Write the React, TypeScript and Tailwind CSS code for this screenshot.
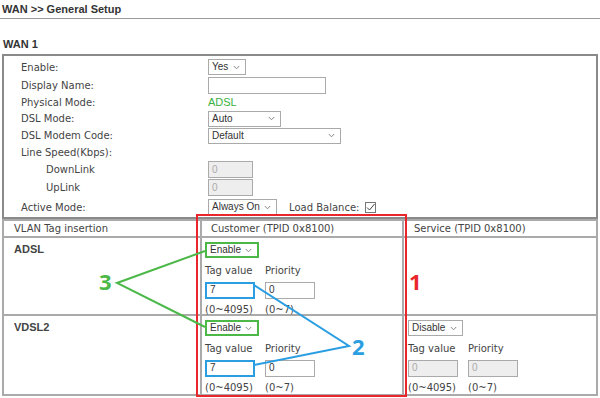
import React from 'react';

const ctrlFont = { fontFamily: '"Liberation Sans", Arial, sans-serif' };

const Chevron = () => (
  <svg width="7" height="5" viewBox="0 0 7 5" className="ml-auto mr-[5px] shrink-0">
    <path d="M0.8 1 L3.5 3.8 L6.2 1" fill="none" stroke="#888" strokeWidth="1" />
  </svg>
);

const Select = ({ value, w, border = 'border border-[#aaa]', h = 'h-[16px]' }: { value: string; w: string; border?: string; h?: string }) => (
  <div
    className={`${w} ${h} ${border} bg-white flex items-center pl-[3px] text-[#333] text-[10px] leading-none whitespace-nowrap`}
    style={ctrlFont}
  >
    <span>{value}</span>
    <Chevron />
  </div>
);

const Input = ({ value = '', w, disabled = false, border = 'border border-[#aaa]', h = 'h-[17px]' }: { value?: string; w: string; disabled?: boolean; border?: string; h?: string }) => (
  <div
    className={`${w} ${h} ${border} flex items-center pl-[3px] leading-none text-[10px] ${disabled ? 'bg-[#eeeeee] text-[#aaa]' : 'bg-white text-[#333]'}`}
    style={ctrlFont}
  >
    {value}
  </div>
);

const Row = ({ label, indent = false, h, children }: { label: string; indent?: boolean; h: string; children?: React.ReactNode }) => (
  <div className={`flex items-center ${h}`}>
    <div className={`w-[204px] shrink-0 ${indent ? 'pl-[42px]' : 'pl-[17px]'} text-[#444]`}>{label}</div>
    <div className="flex items-center">{children}</div>
  </div>
);

const TagBlock = ({
  sel,
  selBorder,
  tagBorder,
  disabled = false,
  tag,
}: {
  sel: string;
  selBorder?: string;
  tagBorder?: string;
  disabled?: boolean;
  tag: string;
}) => (
  <div className="flex flex-col pl-[3px]">
    <div className="h-[22px] flex items-center">
      <Select value={sel} w={sel === 'Enable' ? 'w-[54px]' : 'w-[55px]'} border={selBorder} />
    </div>
    <div className="h-[19px] flex items-center gap-[10px] text-[#444]">
      <span className="w-[50px]">Tag value</span>
      <span>Priority</span>
    </div>
    <div className="h-[20px] flex items-center gap-[10px]">
      <Input value={tag} w="w-[50px]" disabled={disabled} border={tagBorder} />
      <Input value="0" w="w-[50px]" disabled={disabled} />
    </div>
    <div className="h-[18px] flex items-center gap-[10px] text-[#444]">
      <span className="w-[50px]">(0~4095)</span>
      <span>(0~7)</span>
    </div>
  </div>
);

export default function App() {
  return (
    <div
      className="relative w-[600px] h-[398px] bg-white overflow-hidden text-[10px] text-[#333]"
      style={{ fontFamily: '"DejaVu Sans", Verdana, sans-serif' }}
    >
      {/* Title */}
      <div
        className="h-[19px] flex items-center pl-[2px] border-b border-[#999] font-bold text-[11px] text-[#333]"
        style={ctrlFont}
      >
        WAN &gt;&gt; General Setup
      </div>

      <div className="h-[35px] flex items-end pb-[2px] pl-[3px] font-bold text-[11px]" style={ctrlFont}>
        WAN 1
      </div>

      <div className="mx-[2px] border-2 border-[#8a8a8a] pt-[2px]">
        <Row label="Enable:" h="h-[18px]">
          <Select value="Yes" w="w-[38px]" />
        </Row>
        <Row label="Display Name:" h="h-[18px]">
          <Input w="w-[118px]" />
        </Row>
        <Row label="Physical Mode:" h="h-[16px]">
          <span className="text-[#3cb043] text-[11px]" style={ctrlFont}>ADSL</span>
        </Row>
        <Row label="DSL Mode:" h="h-[17px]">
          <Select value="Auto" w="w-[73px]" />
        </Row>
        <Row label="DSL Modem Code:" h="h-[17px]">
          <Select value="Default" w="w-[133px]" />
        </Row>
        <Row label="Line Speed(Kbps):" h="h-[17px]" />
        <Row label="DownLink" indent h="h-[17px]">
          <Input value="0" w="w-[45px]" disabled />
        </Row>
        <Row label="UpLink" indent h="h-[19px]">
          <Input value="0" w="w-[45px]" disabled />
        </Row>
        <Row label="Active Mode:" h="h-[20px]">
          <Select value="Always On" w="w-[69px]" />
          <span className="ml-[12px] text-[#444]">Load Balance:</span>
          <span className="ml-[6px] w-[11px] h-[11px] border border-[#777] flex items-center justify-center">
            <svg width="9" height="9" viewBox="0 0 9 9">
              <path d="M1 4.5 L3.5 7 L8.5 1" fill="none" stroke="#444" strokeWidth="1" />
            </svg>
          </span>
        </Row>
      </div>

      {/* VLAN table */}
      <div className="mx-[2px] border-2 border-[#aaa] text-[#444]">
        <div className="grid grid-cols-[196px_202px_1fr] h-[17px] border-b-2 border-[#aaa]">
          <div className="pl-[10px] flex items-center">VLAN Tag insertion</div>
          <div className="pl-[9px] flex items-center border-l-2 border-[#aaa]">Customer (TPID 0x8100)</div>
          <div className="pl-[10px] flex items-center border-l-2 border-[#aaa]">Service (TPID 0x8100)</div>
        </div>
        <div className="grid grid-cols-[196px_202px_1fr] h-[78px] border-b-2 border-[#aaa]">
          <div className="pl-[10px] pt-[3px] font-bold text-[11px]" style={ctrlFont}>ADSL</div>
          <div className="border-l-2 border-[#aaa] pt-[1px]">
            <TagBlock sel="Enable" selBorder="border-2 border-[#4cb848]" tagBorder="border-2 border-[#2b9ee2]" tag="7" />
          </div>
          <div className="border-l-2 border-[#aaa]" />
        </div>
        <div className="grid grid-cols-[196px_202px_1fr] h-[78px]">
          <div className="pl-[10px] pt-[3px] font-bold text-[11px]" style={ctrlFont}>VDSL2</div>
          <div className="border-l-2 border-[#aaa] pt-[1px]">
            <TagBlock sel="Enable" selBorder="border-2 border-[#4cb848]" tagBorder="border-2 border-[#2b9ee2]" tag="7" />
          </div>
          <div className="border-l-2 border-[#aaa] pt-[1px] pl-[1px]">
            <TagBlock sel="Disable" disabled tag="0" />
          </div>
        </div>
      </div>

      {/* Annotations */}
      <svg className="absolute left-0 top-0 pointer-events-none" width="600" height="398">
        <rect x="197" y="215" width="209" height="181" fill="none" stroke="#e8262b" strokeWidth="2" />
        <polyline points="205,251 117,283 205,327" fill="none" stroke="#4cb848" strokeWidth="2" />
        <polyline points="254,285 349,346 254,365" fill="none" stroke="#2b9ee2" strokeWidth="2" />
      </svg>
      <div className="absolute left-[409px] top-[270px] text-[22px] leading-none font-bold text-[#e8262b]" style={{ fontFamily: '"Open Sans", sans-serif' }}>
        1
      </div>
      <div className="absolute left-[352px] top-[335px] text-[22px] leading-none font-bold text-[#2b9ee2]" style={{ fontFamily: '"Open Sans", sans-serif' }}>
        2
      </div>
      <div className="absolute left-[99px] top-[270px] text-[22px] leading-none font-bold text-[#4cb848]" style={{ fontFamily: '"Open Sans", sans-serif' }}>
        3
      </div>
    </div>
  );
}
